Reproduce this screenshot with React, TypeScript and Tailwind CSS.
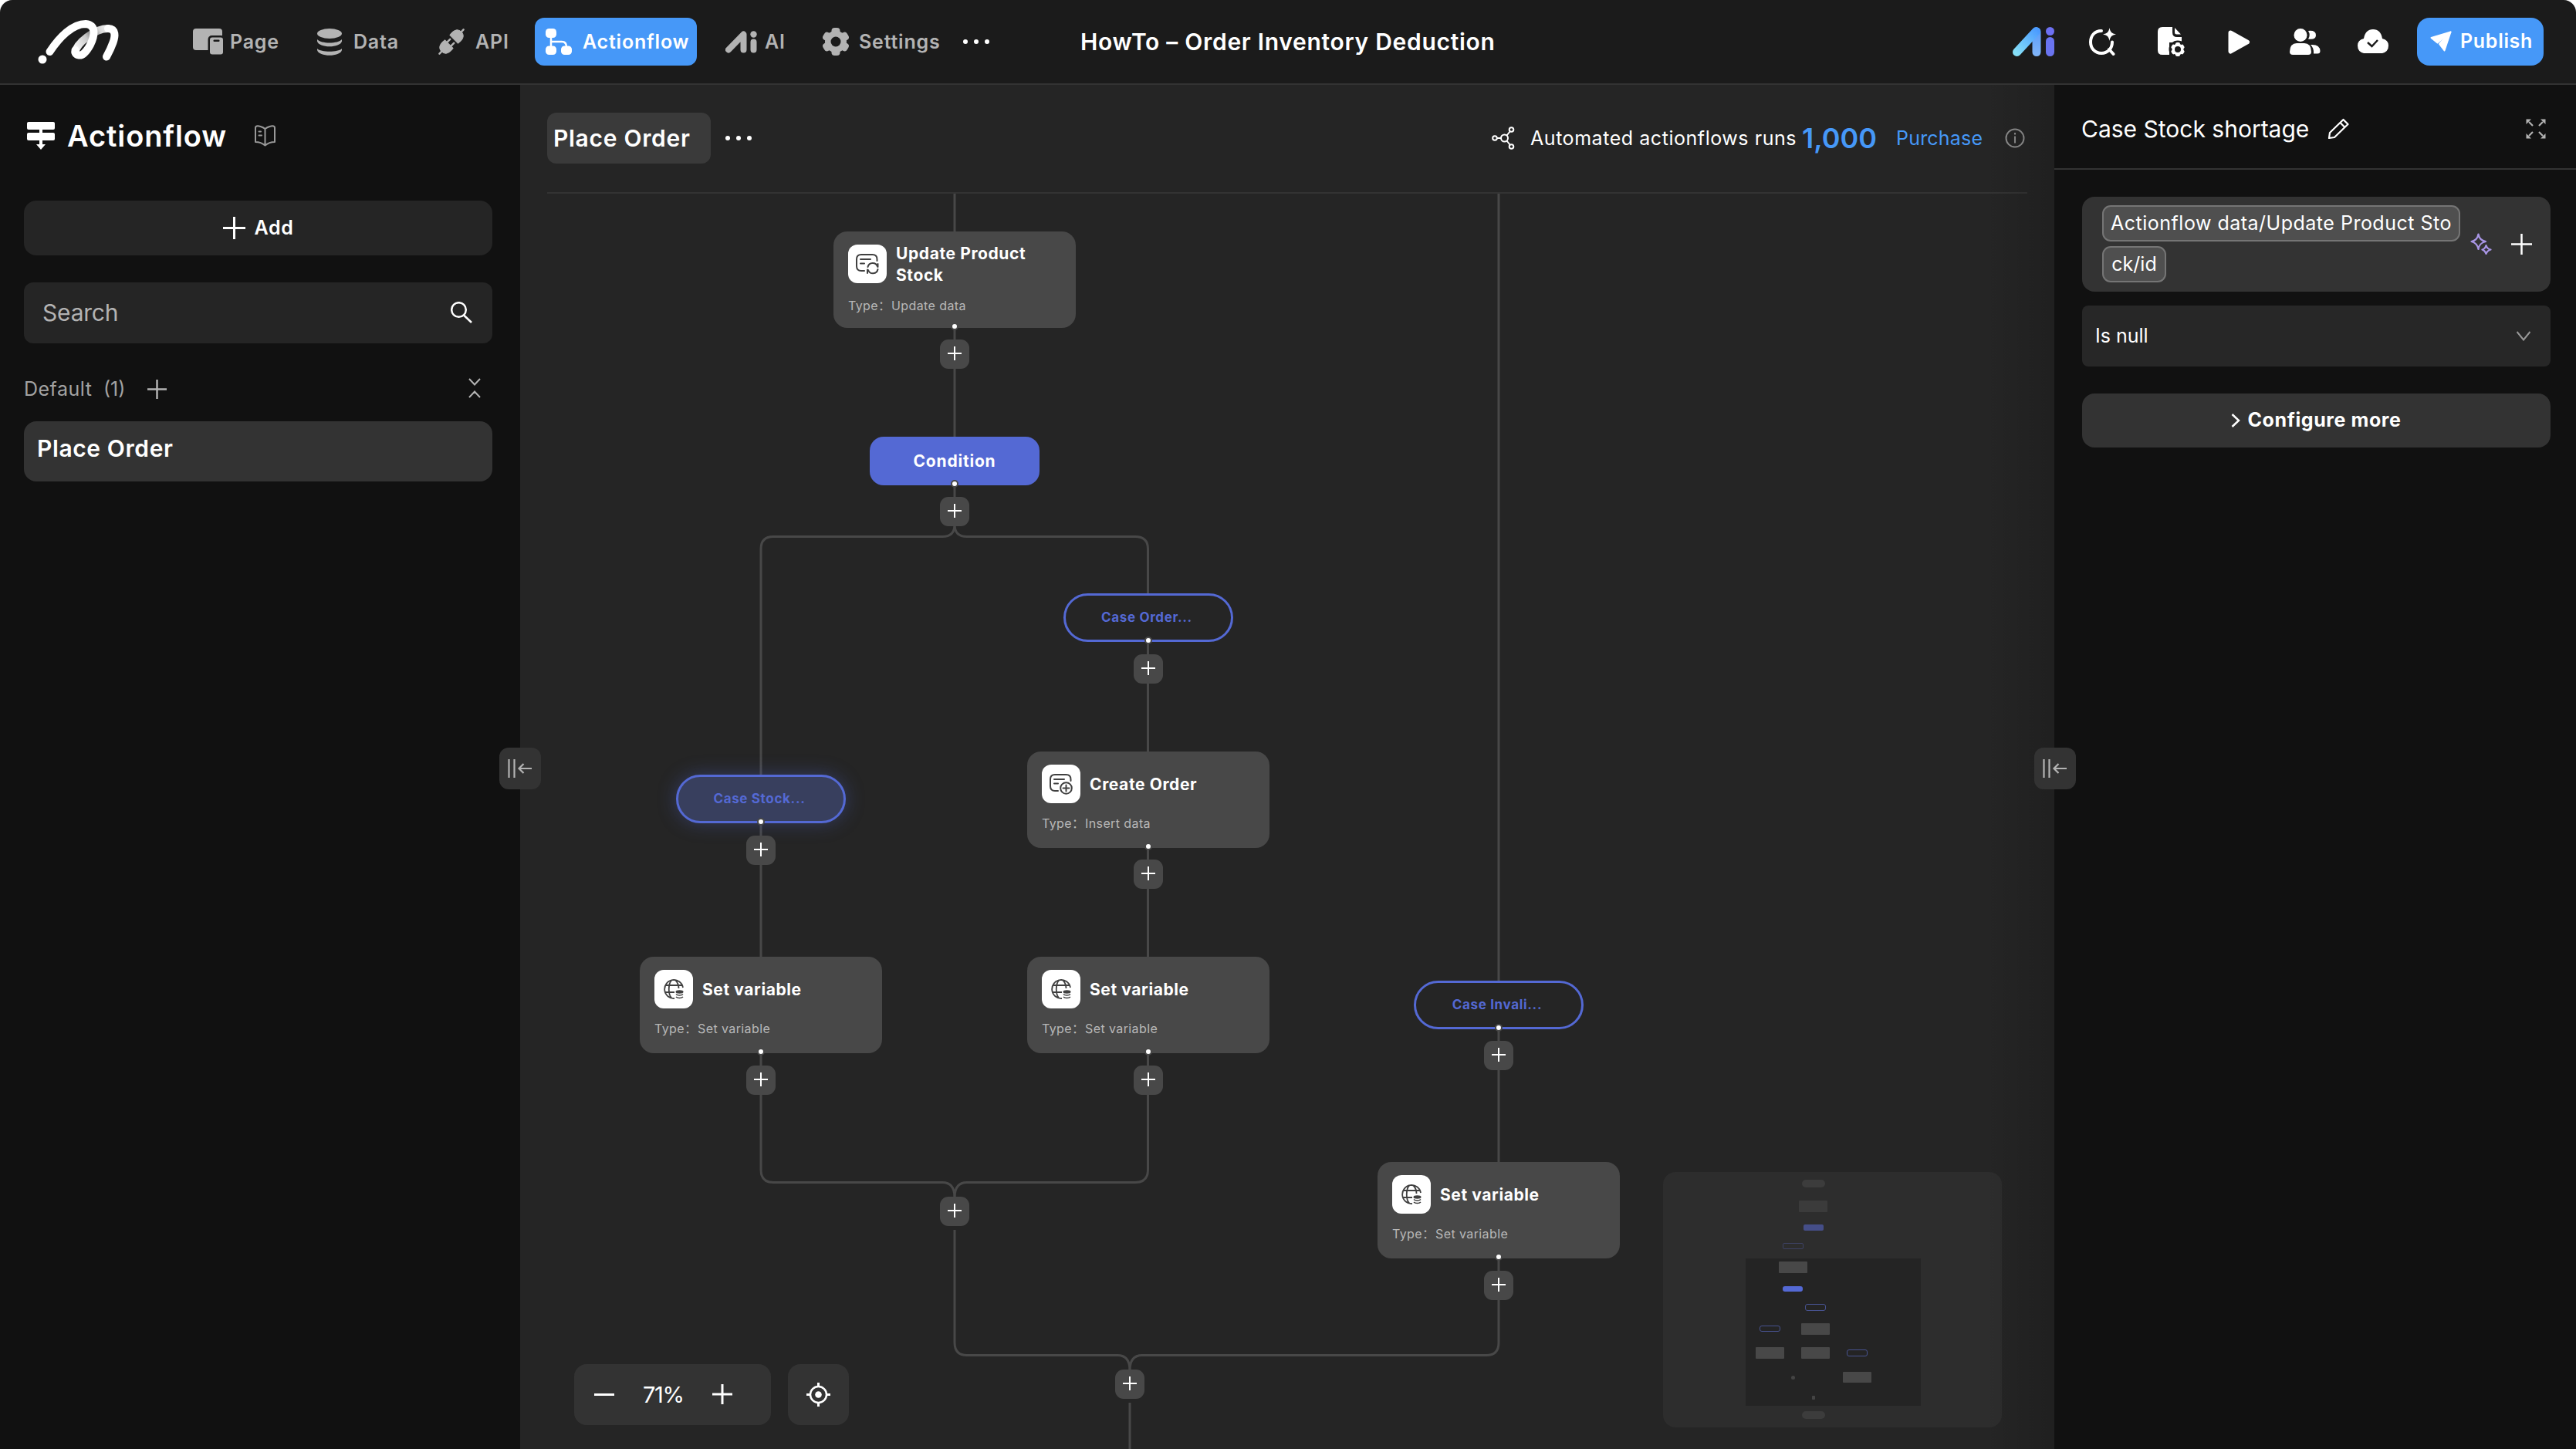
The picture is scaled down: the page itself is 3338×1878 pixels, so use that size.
import type { ReactNode } from 'react';

// Top left corner of the diagram area inside the page
const ORIGIN_X = 674;
const ORIGIN_Y = 251;

type IconKind = 'update' | 'insert' | 'variable';

interface ActionNode {
  x: number;
  y: number;
  title: string;
  type: string;
  icon: IconKind;
  twoLines?: boolean;
}

interface CaseNode {
  x: number;
  y: number;
  label: string;
  active?: boolean;
}

const actions: ActionNode[] = [
  { x: 1080, y: 300, title: 'Update Product Stock', type: 'Update data', icon: 'update', twoLines: true },
  { x: 1331, y: 974, title: 'Create Order', type: 'Insert data', icon: 'insert' },
  { x: 829, y: 1240, title: 'Set variable', type: 'Set variable', icon: 'variable' },
  { x: 1331, y: 1240, title: 'Set variable', type: 'Set variable', icon: 'variable' },
  { x: 1785, y: 1506, title: 'Set variable', type: 'Set variable', icon: 'variable' },
];

const cases: CaseNode[] = [
  { x: 1378, y: 769, label: 'Case Order...' },
  { x: 876, y: 1004, label: 'Case Stock...', active: true },
  { x: 1832, y: 1271, label: 'Case Invali...' },
];

// Centre x and top y of every "add step" button
const addButtons = [
  [1237, 440],
  [1237, 644],
  [1488, 848],
  [986, 1083],
  [1488, 1114],
  [1942, 1349],
  [986, 1381],
  [1488, 1381],
  [1237, 1551],
  [1942, 1647],
  [1464, 1775],
];

const ports = [
  [1237, 423],
  [1237, 627],
  [1488, 830],
  [986, 1065],
  [1488, 1097],
  [986, 1363],
  [1488, 1363],
  [1942, 1332],
  [1942, 1629],
];

const miniBlocks = [
  { x: 180, y: 10, w: 30, h: 10, cls: 'bg-[#3c3c3c] rounded-full' },
  { x: 176, y: 37, w: 37, h: 15, cls: 'bg-[#3b3b3b] rounded-[1px]' },
  { x: 182, y: 68, w: 26, h: 8, cls: 'bg-[#454e88] rounded-[2px]' },
  { x: 155, y: 92, w: 27, h: 8, cls: 'border border-[#3d4163] rounded-[2px]' },
  { x: 150, y: 116, w: 37, h: 15, cls: 'bg-[#484848] rounded-[1px]' },
  { x: 155, y: 148, w: 26, h: 7, cls: 'bg-[#5469d4] rounded-[3px]' },
  { x: 184, y: 171, w: 27, h: 9, cls: 'border border-[#47528f] rounded-[3px]' },
  { x: 125, y: 199, w: 27, h: 8, cls: 'border border-[#47528f] rounded-[3px]' },
  { x: 179, y: 196, w: 37, h: 15, cls: 'bg-[#484848] rounded-[1px]' },
  { x: 120, y: 227, w: 37, h: 15, cls: 'bg-[#484848] rounded-[1px]' },
  { x: 179, y: 227, w: 37, h: 15, cls: 'bg-[#484848] rounded-[1px]' },
  { x: 238, y: 230, w: 27, h: 9, cls: 'border border-[#47528f] rounded-[3px]' },
  { x: 233, y: 259, w: 37, h: 14, cls: 'bg-[#484848] rounded-[1px]' },
  { x: 166, y: 264, w: 5, h: 5, cls: 'bg-[#444] rounded-full' },
  { x: 193, y: 290, w: 4, h: 5, cls: 'bg-[#444] rounded-[1px]' },
  { x: 180, y: 310, w: 30, h: 10, cls: 'bg-[#3c3c3c] rounded-full' },
];

/* ---------- icons ---------- */

function Plus({ size, stroke = 2, className = '' }: { size: number; stroke?: number; className?: string }) {
  const c = size / 2;
  return (
    <svg width={size} height={size} className={`shrink-0 ${className}`} fill="none" stroke="currentColor" strokeWidth={stroke}>
      <path d={`M${c} 0V${size}M0 ${c}H${size}`} />
    </svg>
  );
}

function Dots() {
  return (
    <svg width="34" height="8" viewBox="0 0 34 8" className="shrink-0" fill="#fff">
      <circle cx="3" cy="4" r="3" />
      <circle cx="17" cy="4" r="3" />
      <circle cx="31" cy="4" r="3" />
    </svg>
  );
}

function Logo() {
  return (
    <svg width="106" height="57" viewBox="0 0 106 57" className="shrink-0" fill="none" strokeLinecap="round" strokeLinejoin="round">
      <defs>
        <linearGradient id="loop" x1="48" y1="40" x2="96" y2="8" gradientUnits="userSpaceOnUse">
          <stop offset="0" stopColor="#fff" />
          <stop offset="0.38" stopColor="#c9c9c9" />
          <stop offset="0.55" stopColor="#7d7d7d" />
          <stop offset="0.72" stopColor="#d8d8d8" />
          <stop offset="1" stopColor="#fff" />
        </linearGradient>
      </defs>
      <path d="M48.500 42C50 30 74 11 91 11" stroke="url(#loop)" strokeWidth="10" />
      <path d="M91 11C102 11 100 22 97.500 29C95 36 92 42 89 47.500" stroke="#fff" strokeWidth="10" />
      <path d="M15.500 41C28 22 45 5 62 5C77 6 73 22 68 32C62 43 57 46 53.500 45.500C50 45 48 44 48.500 39" stroke="#fff" strokeWidth="10" />
      <circle cx="6" cy="51" r="5.500" fill="#fff" />
    </svg>
  );
}

function PageIcon() {
  return (
    <svg width="39" height="34" viewBox="0 0 39 34" fill="#b3b3b3">
      <rect width="38" height="28" rx="4" />
      <rect x="19.500" y="9" width="22" height="28" rx="5" fill="#1b1b1b" />
      <rect x="22" y="11.500" width="17" height="22" rx="3" />
      <rect x="26.500" y="14.500" width="8" height="2.500" rx="1" fill="#1b1b1b" />
    </svg>
  );
}

function DataIcon() {
  return (
    <svg width="32" height="35" viewBox="0 0 32 35" fill="#b3b3b3">
      <ellipse cx="16" cy="6.500" rx="16" ry="6.500" />
      <path d="M0 14C5 20 27 20 32 14V16.500C30 25.500 2 25.500 0 16.500Z" />
      <path d="M0 26C5 31 27 31 32 26V28C30 37 2 37 0 28Z" />
    </svg>
  );
}

function ApiIcon() {
  return (
    <svg width="34" height="34" viewBox="0 0 34 34" fill="#b3b3b3" stroke="#b3b3b3" strokeLinecap="round">
      <g transform="rotate(45 17 17)">
        <path d="M9.500 12.500C8 2 12 -1 17 -1C22 -1 26 2 24.500 12.500Z" strokeWidth="1" strokeLinejoin="round" />
        <path d="M9.500 21.500C8 32 12 35 17 35C22 35 26 32 24.500 21.500Z" strokeWidth="1" strokeLinejoin="round" />
        <path d="M17 -1V-5M17 35V39M13.500 21V16M20.500 21V16" strokeWidth="2.500" fill="none" />
      </g>
    </svg>
  );
}

function FlowIcon() {
  return (
    <svg width="34" height="34" viewBox="0 0 34 34" fill="#fff">
      <rect width="14" height="12" rx="4.500" />
      <rect y="22.500" width="14" height="11.500" rx="4.500" />
      <rect x="20" y="22.500" width="14" height="11.500" rx="4.500" />
      <path d="M7 10V24M7 17H21Q27 17 27 24" fill="none" stroke="#fff" strokeWidth="2.500" />
    </svg>
  );
}

function AiIcon() {
  return (
    <svg width="41" height="29" viewBox="0 0 41 29" fill="none" stroke="#b3b3b3" strokeLinecap="round" strokeWidth="8">
      <path d="M4 24.500L23.500 4.500V24.500M36.500 14.500V24.500" strokeLinejoin="round" />
      <circle cx="36.500" cy="4.500" r="4.200" fill="#b3b3b3" stroke="none" />
    </svg>
  );
}

function AiColorIcon() {
  return (
    <svg width="54" height="38" viewBox="0 0 54 38" fill="none" strokeLinecap="round" strokeWidth="11">
      <defs>
        <linearGradient id="aiDiag" x1="4" y1="34" x2="32" y2="4" gradientUnits="userSpaceOnUse">
          <stop stopColor="#86e0f7" />
          <stop offset="1" stopColor="#4b9bff" />
        </linearGradient>
        <linearGradient id="aiStem" x1="31" y1="4" x2="31" y2="36" gradientUnits="userSpaceOnUse">
          <stop stopColor="#5b9cf8" />
          <stop offset="1" stopColor="#7fb4f8" />
        </linearGradient>
      </defs>
      <path d="M31 6V32.500" stroke="url(#aiStem)" />
      <path d="M5.500 32.500L30.500 5.500" stroke="url(#aiDiag)" />
      <path d="M48.500 18.500V32.500" stroke="#6a74f0" />
      <circle cx="48.500" cy="5.500" r="5.500" fill="#6d70f2" />
    </svg>
  );
}

function Gear() {
  return (
    <svg width="36" height="36" viewBox="0 0 36 36" fill="#b3b3b3">
      <circle cx="18" cy="18" r="14" />
      <rect x="12.500" width="11" height="36" rx="4" />
      <rect x="12.500" width="11" height="36" rx="4" transform="rotate(60 18 18)" />
      <rect x="12.500" width="11" height="36" rx="4" transform="rotate(120 18 18)" />
      <circle cx="18" cy="18" r="6.500" fill="#1b1b1b" />
    </svg>
  );
}

function AskIcon() {
  return (
    <svg width="36" height="36" viewBox="0 0 36 36" fill="none" stroke="#fff" strokeWidth="4" strokeLinecap="round">
      <path d="M16 4C7 4 2 10.500 2 18.500C2 27 8 33 16 33C24 33 30 27 30 18.500M26 28L31.500 34" />
      <path d="M26.500 0C27.500 5.500 29.500 7.500 35 8.500C29.500 9.500 27.500 11.500 26.500 17C25.500 11.500 23.500 9.500 18 8.500C23.500 7.500 25.500 5.500 26.500 0Z" fill="#fff" stroke="none" />
    </svg>
  );
}

function DocGearIcon() {
  return (
    <svg width="36" height="38" viewBox="0 0 36 38" fill="#fff">
      <path d="M6 0H19V7Q19 13 25 13H31V20H15V36H6Q0 36 0 30V6Q0 0 6 0Z" />
      <path d="M22 1L30 9.500H24.500Q22 9.500 22 7Z" />
      <circle cx="26" cy="29" r="11.500" fill="#1b1b1b" />
      <circle cx="26" cy="29" r="7.500" />
      <rect x="23" y="20" width="6" height="18" rx="2" />
      <rect x="23" y="20" width="6" height="18" rx="2" transform="rotate(60 26 29)" />
      <rect x="23" y="20" width="6" height="18" rx="2" transform="rotate(120 26 29)" />
      <circle cx="26" cy="29" r="4" fill="#1b1b1b" />
    </svg>
  );
}

function PlayIcon() {
  return (
    <svg width="29" height="31" viewBox="0 0 29 31" fill="#fff" stroke="#fff" strokeWidth="6" strokeLinejoin="round">
      <path d="M3.500 3.500L25 15.500L3.500 27.500Z" />
    </svg>
  );
}

function UsersIcon() {
  return (
    <svg width="40" height="34" viewBox="0 0 40 34" fill="#fff">
      <ellipse cx="14" cy="8.500" rx="8.500" ry="8.500" />
      <path d="M9 19H19Q27.500 19 28 30Q28 34 24 34H4Q0 34 0 30Q0.500 19 9 19Z" />
      <path d="M24 3Q34 2 34 8.500Q34 15 24 13.500Q27.500 8.500 24 3Z" />
      <path d="M27 21Q39 20 39.500 29Q39.500 32.500 36 32.500H31Q31.500 25 27 21Z" />
    </svg>
  );
}

function CloudIcon() {
  return (
    <svg width="40" height="32" viewBox="0 0 40 32" fill="#fff">
      <path d="M8 31Q0 29 0 21Q0 14 8 12Q10 0 20 0Q30 0 32 12Q40 14 40 21Q40 29 32 31Z" />
      <path d="M13 17L18.500 22L26 14" fill="none" stroke="#1b1b1b" strokeWidth="2.500" />
    </svg>
  );
}

function PlaneIcon() {
  return (
    <svg width="28" height="27" viewBox="0 0 28 27" fill="#fff" stroke="#fff" strokeWidth="2" strokeLinejoin="round">
      <path d="M1.500 9L26.500 1.500L9.500 15.500Z" />
      <path d="M26.500 1.500L18.500 25.500L12 17Z" />
    </svg>
  );
}

function SidebarFlowIcon() {
  return (
    <svg width="36" height="36" viewBox="0 0 36 36" fill="#fff">
      <rect width="36" height="10" rx="2" />
      <rect y="14" width="36" height="10" rx="2" />
      <path d="M16 9H20V15H16ZM16 23H20V29H24L18 36L12 29H16Z" />
    </svg>
  );
}

function BookIcon() {
  return (
    <svg width="27" height="28" viewBox="0 0 27 28" fill="none" stroke="#999" strokeWidth="2" strokeLinejoin="round" strokeLinecap="round">
      <path d="M13.500 5C10 2 5 1 2.500 1.500Q1 2 1 3.500V22C5 22 10 23.500 13.500 26.500C17 23.500 22 22 26 22V3.500Q26 2 24.500 1.500C22 1 17 2 13.500 5V26M5.500 8.500H8M5.500 13.500H9" />
    </svg>
  );
}

function SearchIcon() {
  return (
    <svg width="28" height="28" viewBox="0 0 28 28" fill="none" stroke="#fff" strokeWidth="2.500">
      <circle cx="10.500" cy="10.500" r="9.300" />
      <path d="M17 17.500L27 27" />
    </svg>
  );
}

function CollapseIcon() {
  return (
    <svg width="16" height="26" viewBox="0 0 16 26" fill="none" stroke="#b3b3b3" strokeWidth="2">
      <path d="M1 1L8 8.500L15 1M1 25L8 17.500L15 25" />
    </svg>
  );
}

function NodesIcon() {
  return (
    <svg width="30" height="30" viewBox="0 0 30 30" fill="none" stroke="#fff" strokeWidth="2">
      <circle cx="16.500" cy="15" r="4.500" />
      <circle cx="4" cy="15" r="2.800" />
      <circle cx="25.500" cy="4" r="2.800" />
      <circle cx="25.500" cy="26" r="2.800" />
      <path d="M7 15H12M19.500 11.500L23.500 6.500M19.500 18.500L23.500 23.500" />
    </svg>
  );
}

function InfoIcon() {
  return (
    <svg width="26" height="26" viewBox="0 0 26 26" fill="none" stroke="#8c8c8c" strokeWidth="2">
      <circle cx="13" cy="13" r="11.500" />
      <path d="M13 10.500V19.500M13 6V8.500" />
    </svg>
  );
}

function PencilIcon() {
  return (
    <svg width="28" height="28" viewBox="0 0 28 28" fill="none" stroke="#fff" strokeWidth="2.200" strokeLinejoin="round">
      <path d="M2 26L3 19L20.500 2L26.500 8L9 25Z" />
      <path d="M16.500 6L22.500 12" />
    </svg>
  );
}

function ExpandIcon() {
  return (
    <svg width="26" height="26" viewBox="0 0 26 26" fill="#b3b3b3" stroke="#b3b3b3" strokeWidth="2.200">
      <path d="M4 4L9 9M22 4L17 9M4 22L9 17M22 22L17 17" />
      <path d="M0.500 0.500H7L0.500 7ZM25.500 0.500H19L25.500 7ZM0.500 25.500H7L0.500 19ZM25.500 25.500H19L25.500 19Z" stroke="none" />
    </svg>
  );
}

function SparkleIcon() {
  return (
    <svg width="28" height="28" viewBox="0 0 28 28" fill="none" stroke="#a996e6" strokeWidth="2.200" strokeLinejoin="round">
      <path d="M10.500 1.500C11.500 7 14 10 20 11C14 12.500 11.500 15 10.500 21C9.500 15 7 12.500 1.500 11C7 10 9.500 7 10.500 1.500Z" />
      <path d="M20.500 16C21.500 19.500 23 21 26.500 21.500C23 22.500 21.500 24 20.500 27C19.500 24 18 22.500 15.500 21.500C18 21 19.500 19.500 20.500 16Z" />
    </svg>
  );
}

function TargetIcon() {
  return (
    <svg width="31" height="31" viewBox="0 0 31 31" fill="none" stroke="#fff" strokeWidth="2.500">
      <circle cx="15.500" cy="15.500" r="10.500" />
      <circle cx="15.500" cy="15.500" r="4.300" fill="#fff" stroke="none" />
      <path d="M15.500 0V5.500M15.500 25.500V31M0 15.500H5.500M25.500 15.500H31" strokeWidth="3" />
    </svg>
  );
}

function NodeIcon({ kind }: { kind: IconKind }) {
  if (kind === 'variable') {
    return (
      <svg width="26" height="26" viewBox="0 0 26 26" fill="none" stroke="#404040" strokeWidth="1.800">
        <path d="M25 11A12 12 0 1 0 14 25M10.500 1C5.500 6 5.500 20 10.500 25M15 1C18 4 19.500 8 19.500 12M2.500 8H23.500M1.500 17H14" />
        <ellipse cx="20.500" cy="16.500" rx="5" ry="2.200" fill="#404040" stroke="none" />
        <path d="M16 19.500C18 21.500 23 21.500 25 19.500M16 23C18 25 23 25 25 23" strokeWidth="1.500" />
      </svg>
    );
  }
  return (
    <svg width="30" height="27" viewBox="0 0 30 27" fill="none" stroke="#404040" strokeWidth="2" strokeLinecap="round">
      <path d="M27.500 9V7Q27.500 1 21.500 1H7Q1 1 1 7V16Q1 22 7 22H11M6 7H19M6 12.500H11" />
      {kind === 'insert' ? (
        <>
          <circle cx="21.500" cy="18.500" r="7.300" />
          <path d="M21.500 14.500V22.500M17.500 18.500H25.500" />
        </>
      ) : (
        <path d="M15.500 17A6.500 6.500 0 0 1 28 16.500M28.500 20A6.500 6.500 0 0 1 16 21M28.500 13V17M15 20.500V25" />
      )}
    </svg>
  );
}

/* ---------- pieces ---------- */

function NavItem({ icon, label, className }: { icon: ReactNode; label: string; className: string }) {
  return (
    <div className={`flex items-center shrink-0 text-[#b3b3b3] ${className}`}>
      {icon}
      <span>{label}</span>
    </div>
  );
}

function Handle({ className }: { className: string }) {
  return (
    <button type="button" className={`absolute z-10 w-[54px] h-[54px] rounded-xl bg-[#333] flex items-center justify-center ${className}`}>
      <svg width="32" height="26" viewBox="0 0 32 26" fill="none" stroke="#b3b3b3" strokeWidth="2.200">
        <path d="M1.500 1V25M8.500 1V25M14 13H31M20.500 7L14.500 13L20.500 19" />
      </svg>
    </button>
  );
}

function Header() {
  return (
    <header className="h-[110px] shrink-0 flex items-center bg-[#1b1b1b] border-b-2 border-[#333] rounded-t-2xl font-semibold text-[25px] leading-none tracking-[0.8px]">
      <div className="w-[1400px] flex items-center shrink-0 pl-[49px]">
        <div className="w-[201px]">
          <Logo />
        </div>
        <NavItem icon={<PageIcon />} label="Page" className="w-[161px] gap-[9px]" />
        <NavItem icon={<DataIcon />} label="Data" className="w-[157px] gap-[15px]" />
        <NavItem icon={<ApiIcon />} label="API" className="w-[125px] gap-[14px]" />
        <button type="button" className="w-[210px] h-[62px] shrink-0 rounded-xl bg-[#4698f8] text-white flex items-center gap-[14px] pl-[14px] mr-[37px]">
          <FlowIcon />
          <span>Actionflow</span>
        </button>
        <NavItem icon={<AiIcon />} label="AI" className="w-[125px] gap-[10px]" />
        <NavItem icon={<Gear />} label="Settings" className="w-[183px] gap-[12px]" />
        <Dots />
      </div>
      <h1 className="text-[30px] tracking-[0.7px] text-white whitespace-nowrap">HowTo – Order Inventory Deduction</h1>
      <div className="ml-auto flex items-center pr-[42px]">
        <AiColorIcon />
        <div className="ml-[45px]"><AskIcon /></div>
        <div className="ml-[53px]"><DocGearIcon /></div>
        <div className="ml-[55px]"><PlayIcon /></div>
        <div className="ml-[51px]"><UsersIcon /></div>
        <div className="ml-[48px]"><CloudIcon /></div>
        <button type="button" className="ml-[37px] w-[164px] h-[62px] rounded-2xl bg-[#4698f8] text-white flex items-center gap-[11px] pl-[17px] pb-px">
          <PlaneIcon />
          <span className="tracking-[0.7px]">Publish</span>
        </button>
      </div>
    </header>
  );
}

function Sidebar() {
  return (
    <aside className="relative w-[674px] shrink-0 bg-[#111] pl-[31px] pr-[36px] leading-none text-white">
      <div className="h-[132px] flex items-center pl-1">
        <SidebarFlowIcon />
        <h2 className="ml-[16px] w-[243px] text-[38px] font-semibold tracking-[0.9px]">Actionflow</h2>
        <BookIcon />
      </div>
      <button type="button" className="mt-[18px] w-full h-[71px] rounded-2xl bg-[#252525] flex items-center justify-center gap-[12px] text-[25px] font-semibold tracking-[0.6px]">
        <Plus size={29} stroke={3} />
        Add
      </button>
      <div className="mt-[35px] h-[79px] rounded-xl bg-[#252525] flex items-center justify-between pl-[24px] pr-[26px] pb-px">
        <span className="text-[30px] tracking-[-0.2px] text-[#b3b3b3]">Search</span>
        <SearchIcon />
      </div>
      <div className="h-[101px] pt-[17px] flex items-center text-[25px] text-[#a3a3a3]">
        <span className="w-[103px] tracking-[0.5px]">Default</span>
        <span className="w-[57px]">(1)</span>
        <Plus size={25} stroke={2.5} className="text-[#b3b3b3]" />
        <div className="ml-auto mr-[15px] pb-[3px]">
          <CollapseIcon />
        </div>
      </div>
      <div className="h-[78px] rounded-2xl bg-[#333] flex items-center pl-[17px] pb-2 text-[30px] font-semibold tracking-[0.6px]">Place Order</div>
      <Handle className="left-[647px] top-[859px]" />
    </aside>
  );
}

function Toolbar() {
  return (
    <div className="h-[141px] shrink-0 mx-[35px] pb-px border-b-2 border-[#333] flex items-center leading-none text-white">
      <div className="w-[212px] h-[66px] rounded-xl bg-[#3a3a3a] flex items-center pl-[8px] mr-[19px] text-[30px] font-semibold tracking-[0.7px]">Place Order</div>
      <Dots />
      <div className="ml-auto mr-[3px] flex items-center text-[25px]">
        <NodesIcon />
        <span className="ml-[20px] w-[352px] whitespace-nowrap tracking-[0.55px]">Automated actionflows runs</span>
        <span className="w-[122px] text-[36px] font-semibold text-[#4698f8]">1,000</span>
        <span className="w-[141px] text-[#4698f8] tracking-[0.2px]">Purchase</span>
        <InfoIcon />
      </div>
    </div>
  );
}

function ActionCard({ node }: { node: ActionNode }) {
  return (
    <div
      className="absolute w-[314px] h-[125px] rounded-[18px] bg-[#484848] pl-[19px] pt-[17px]"
      style={{ left: node.x - ORIGIN_X, top: node.y - ORIGIN_Y }}
    >
      <div className="flex items-center gap-[12px] h-[50px]">
        <div className="w-[50px] h-[50px] shrink-0 rounded-xl bg-white flex items-center justify-center">
          <NodeIcon kind={node.icon} />
        </div>
        <div className="w-[190px] pt-px text-[21px] leading-[28px] font-bold tracking-[0.6px] text-white">{node.title}</div>
      </div>
      <div className={`flex text-[16px] leading-[18px] tracking-[0.4px] text-[#b8b8b8] ${node.twoLines ? 'mt-[20px]' : 'mt-[17px]'}`}>
        <span className="w-[56px] whitespace-nowrap">Type：</span>
        <span>{node.type}</span>
      </div>
    </div>
  );
}

function CasePill({ node }: { node: CaseNode }) {
  return (
    <div
      className={`absolute w-[220px] h-[63px] rounded-full border-[3px] border-[#5469d4] flex items-center justify-center pr-1 text-[17px] leading-none font-bold tracking-[0.65px] text-[#5469d4] ${
        node.active ? 'bg-[#383f5e] shadow-[0_0_24px_rgba(84,105,212,0.35)]' : 'bg-[#252525]'
      }`}
      style={{ left: node.x - ORIGIN_X, top: node.y - ORIGIN_Y }}
    >
      {node.label}
    </div>
  );
}

function MiniMap() {
  return (
    <div className="absolute left-[1481px] top-[1268px] w-[439px] h-[331px] rounded-2xl bg-[#2d2d2d] overflow-hidden">
      <div className="absolute left-[107px] top-[112px] w-[227px] h-[191px] bg-[#242424]" />
      {miniBlocks.map((b, i) => (
        <div key={i} className={`absolute ${b.cls}`} style={{ left: b.x, top: b.y, width: b.w, height: b.h }} />
      ))}
    </div>
  );
}

function Diagram() {
  return (
    <div className="relative flex-1 overflow-hidden">
      {/* Connections */}
      <svg className="absolute inset-0" width="1988" height="1627" viewBox="674 251 1988 1627" fill="none" stroke="#484848" strokeWidth="3">
        <path d="M1237 251V682" />
        <path d="M1237 680Q1237 695.500 1221 695.500H1002Q986 695.500 986 711.500V1516Q986 1532.500 1002 1532.500H1221Q1237 1532.500 1237 1552" />
        <path d="M1237 680Q1237 695.500 1253 695.500H1471Q1487.500 695.500 1487.500 711.500V1516Q1487.500 1532.500 1471 1532.500H1253Q1237 1532.500 1237 1552" />
        <path d="M1942 251V1740Q1942 1756.500 1926 1756.500H1480Q1464 1756.500 1464 1776" />
        <path d="M1237 1594V1740Q1237 1756.500 1253 1756.500H1448Q1464 1756.500 1464 1776" />
        <path d="M1464 1818V1878" />
      </svg>

      {actions.map((node) => (
        <ActionCard key={`${node.x}-${node.y}`} node={node} />
      ))}
      <div className="absolute left-[453px] top-[315px] w-[220px] h-[63px] rounded-[18px] bg-[#5469d4] flex items-center justify-center pb-px text-[21px] leading-none font-bold tracking-[0.8px] text-white">
        Condition
      </div>
      {cases.map((node) => (
        <CasePill key={node.label} node={node} />
      ))}

      {ports.map(([x, y]) => (
        <div
          key={`${x}-${y}`}
          className="absolute w-[10px] h-[10px] rounded-full bg-white border-[2.5px] border-[#484848]"
          style={{ left: x - 5 - ORIGIN_X, top: y - 5 - ORIGIN_Y }}
        />
      ))}
      {addButtons.map(([x, y]) => (
        <button
          key={`${x}-${y}`}
          type="button"
          className="absolute w-[38px] h-[38px] rounded-[11px] bg-[#484848] text-white flex items-center justify-center pb-[2px]"
          style={{ left: x - 19 - ORIGIN_X, top: y - ORIGIN_Y }}
        >
          <Plus size={18} stroke={2} />
        </button>
      ))}

      {/* Zoom controls */}
      <div className="absolute left-[70px] top-[1517px] flex gap-[22px] leading-none text-white">
        <div className="w-[255px] h-[79px] rounded-2xl bg-[#333] flex items-center pl-[26px] pb-px">
          <div className="w-[26px] h-[3px] bg-white" />
          <span className="ml-[37px] w-[90px] text-[29px] tracking-[-1.4px]">71%</span>
          <Plus size={26} stroke={3} />
        </div>
        <div className="w-[79px] h-[79px] rounded-2xl bg-[#333] flex items-center justify-center pb-px">
          <TargetIcon />
        </div>
      </div>

      <MiniMap />
    </div>
  );
}

function Inspector() {
  return (
    <aside className="relative w-[676px] shrink-0 bg-[#111] leading-none text-white">
      <div className="h-[110px] border-b-2 border-[#333] pt-[6px] pl-[35px] pr-[39px] flex items-center">
        <h3 className="w-[319px] text-[30px] whitespace-nowrap">Case Stock shortage</h3>
        <PencilIcon />
        <div className="ml-auto">
          <ExpandIcon />
        </div>
      </div>
      <div className="mt-[35px] ml-[36px] w-[607px]">
        <div className="h-[123px] rounded-2xl bg-[#333] flex items-center pl-[26px] pr-[24px] pb-px">
          <div className="w-[477px] flex flex-col items-start gap-[6px] text-[25px] whitespace-nowrap">
            <span className="w-[464px] h-[47px] rounded-[11px] border-2 border-[#757575] bg-[#4f4f4f] flex items-center justify-center tracking-[0.5px]">
              Actionflow data/Update Product Sto
            </span>
            <span className="w-[83px] h-[47px] rounded-[11px] border-2 border-[#757575] bg-[#4f4f4f] flex items-center justify-center">ck/id</span>
          </div>
          <SparkleIcon />
          <Plus size={27} stroke={2.5} className="ml-auto" />
        </div>
        <div className="mt-[18px] h-[79px] rounded-lg bg-[#272727] flex items-center justify-between pl-[17px] pr-[26px] text-[25px]">
          Is null
          <svg width="18" height="13" viewBox="0 0 18 13" fill="none" stroke="#999" strokeWidth="2">
            <path d="M0.500 1L9 11.500L17.500 1" />
          </svg>
        </div>
        <button type="button" className="mt-[35px] w-full h-[70px] rounded-2xl bg-[#333] flex items-center justify-center gap-[9px] pb-px text-[25px] font-bold tracking-[0.6px]">
          <svg width="12" height="18" viewBox="0 0 12 18" fill="none" stroke="#fff" strokeWidth="2.500">
            <path d="M1.500 1L10 9L1.500 17" />
          </svg>
          Configure more
        </button>
      </div>
      <Handle className="left-[-26px] top-[859px]" />
    </aside>
  );
}

export default function App() {
  return (
    <div className="w-[3338px] h-[1878px] bg-white font-['Inter','Noto_Sans_CJK_SC',sans-serif] overflow-hidden flex flex-col">
      <Header />
      <div className="flex-1 flex min-h-0">
        <Sidebar />
        <main className="relative w-[1988px] shrink-0 flex flex-col bg-[#252525]">
          <Toolbar />
          <Diagram />
          <div className="absolute right-0 inset-y-0 w-[90px] bg-linear-to-r from-transparent to-black/15 pointer-events-none" />
        </main>
        <Inspector />
      </div>
    </div>
  );
}
